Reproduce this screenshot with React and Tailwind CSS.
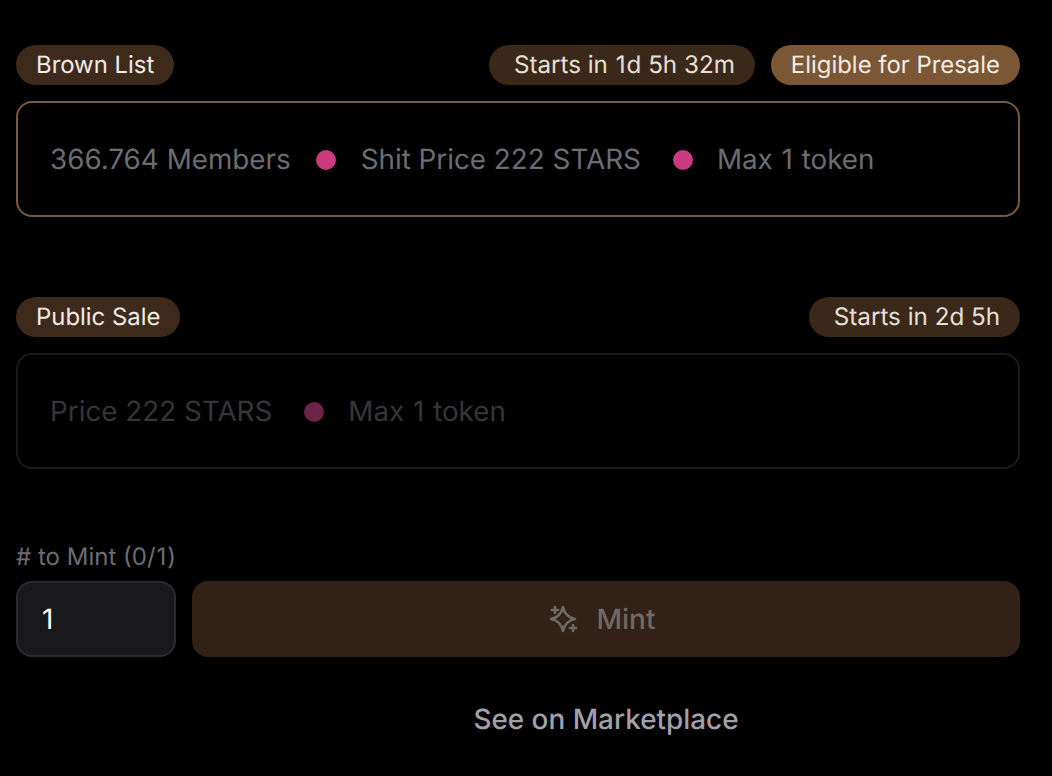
import React from "react";

function Pill({ children, light }) {
  return (
    <div className={`h-10 flex items-center rounded-full px-5 text-[23.9px] text-[#f1ece6] ${light ? "bg-[#7b5736]" : "bg-[#3d2a1a]"}`}>
      {children}
    </div>
  );
}

function TimerPill({ children }) {
  return (
    <div className="h-10 flex items-center rounded-full pl-[25px] pr-5 text-[24.2px] text-[#e6e0d9] bg-[#3a2819] whitespace-pre">
      {children}
    </div>
  );
}

function Dot({ dim }) {
  return <span className={`w-5 h-5 rounded-full ${dim ? "bg-[#6e2149]" : "bg-[#ca3a80]"}`} />;
}

// the reference's "1" sits a little wider than this Inter's
function One() {
  return <span className="px-px">1</span>;
}

function MintIcon() {
  return (
    <svg viewBox="0 0 30 30" className="w-[30px] h-[30px]" fill="none" stroke="currentColor" strokeWidth="2.6" strokeLinejoin="round" strokeLinecap="round">
      <path d="M14 3Q16 13 26 15Q16 17 14 27Q12 17 2 15Q12 13 14 3z" />
      <path d="M6 3v6M3 6h6" />
      <path d="M24 21v6M21 24h6" />
    </svg>
  );
}

export default function App() {
  return (
    <div className="w-[1052px] h-[776px] bg-black pl-4 pr-8 pt-[45px] overflow-hidden font-['Inter',sans-serif] [text-rendering:geometricPrecision]">
      <div className="flex items-center justify-between mb-4">
        <Pill>Brown List</Pill>
        <div className="flex gap-4">
          <TimerPill>Starts in <One />d 5h 32m</TimerPill>
          <Pill light>Eligible for Presale</Pill>
        </div>
      </div>
      <div className="h-[116px] flex items-center gap-6 rounded-2xl border-2 border-[#795a41] pl-8 pt-[2px] text-[27.8px] text-[#6c6c73]">
        <span className="mr-px">366.764 Members</span>
        <Dot />
        <span className="ml-px mr-2">Shit Price 222 STARS</span>
        <Dot />
        <span>Max <One /> token</span>
      </div>

      <div className="flex items-center justify-between mt-20 mb-4">
        <Pill>Public Sale</Pill>
        <TimerPill>Starts in 2d 5h</TimerPill>
      </div>
      <div className="h-[116px] flex items-center gap-6 rounded-2xl border-2 border-[#1a1a1c] pl-8 pt-[2px] text-[27.8px] text-[#353539]">
        <span className="mr-2">Price 222 STARS</span>
        <Dot dim />
        <span>Max <One /> token</span>
      </div>

      <div className="mt-[74px] text-[24px] leading-7 text-[#6c6c73]"># to Mint (0/<One />)</div>
      <div className="flex gap-4 mt-[10px]">
        <div className="w-40 h-[76px] flex items-center rounded-2xl border-2 border-[#2a2b30] bg-[#18181d] px-6 text-[28px] text-white">1</div>
        <div className="flex-1 h-[76px] flex items-center justify-center gap-[18px] pr-2 rounded-2xl bg-[#312116] text-[28px] font-medium text-[#6f6a67]">
          <MintIcon />
          <span>Mint</span>
        </div>
      </div>
      <div className="flex mt-[45px]">
        <div className="w-[176px]" />
        <div className="flex-1 text-center text-[27.9px] leading-[34px] font-medium text-[#a1a1aa]">See on Marketplace</div>
      </div>
    </div>
  );
}
